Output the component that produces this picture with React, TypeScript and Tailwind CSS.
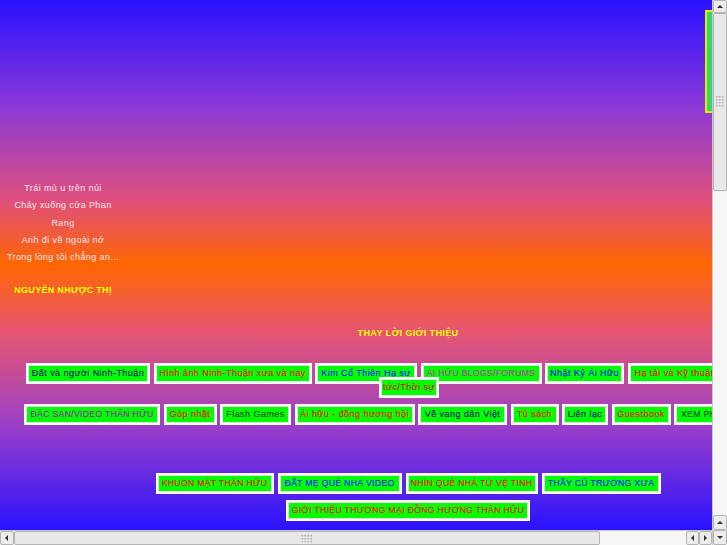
import React from "react";

type Btn = { label: string; w: number; color: string; left?: boolean };

const rowOne: Btn[] = [
  { label: "Đất và người Ninh-Thuận", w: 124, color: "text-[#14206e]" },
  { label: "Hình ảnh Ninh-Thuận xưa và nay", w: 158, color: "text-[#ee1111]" },
  { label: "Kim Cổ Thiên Hạ sự", w: 102, color: "text-[#1a1aff]" },
  { label: "ÁI HỮU BLOGS/FORUMS", w: 121, color: "text-[#b0449c]" },
  { label: "Nhật Ký Ái Hữu", w: 79, color: "text-[#1414e6]" },
  { label: "Hạ tải và Kỹ thuật", w: 140, color: "text-[#ee1111]", left: true },
];

const rowTwo: Btn[] = [
  { label: "ĐẶC SAN/VIDEO THÂN HỮU", w: 136, color: "text-[#8a2fa0]" },
  { label: "Góp nhặt", w: 53, color: "text-[#ee1111]" },
  { label: "Flash Games", w: 71, color: "text-[#1f4a1f]" },
  { label: "Ái hữu - đồng hương hội", w: 120, color: "text-[#ee1111]" },
  { label: "Về vang dân Việt", w: 89, color: "text-[#14206e]" },
  { label: "Tủ sách", w: 48, color: "text-[#ee1111]" },
  { label: "Liên lạc", w: 46, color: "text-[#14206e]" },
  { label: "Guestbook", w: 59, color: "text-[#ee1111]" },
  { label: "XEM PHIM", w: 100, color: "text-[#1f4a1f]", left: true },
];

const rowThree: Btn[] = [
  { label: "KHUÔN MẶT THÂN HỮU", w: 118, color: "text-[#ee1111]" },
  { label: "ĐẤT MẸ QUÊ NHÀ VIDEO", w: 124, color: "text-[#1a1aff]" },
  { label: "NHÌN QUÊ NHÀ TỪ VỆ TINH", w: 132, color: "text-[#ee1111]" },
  { label: "THẦY CŨ TRƯỜNG XƯA", w: 119, color: "text-[#1a1aff]" },
];

const poem = [
  "Trái mù u trên núi",
  "Chảy xuống cửa Phan",
  "Rang",
  "Anh đi về ngoài nớ",
  "Trong lòng tôi chẳng an...",
];

function NavButton({ b, children }: { b: Btn; children?: React.ReactNode }) {
  const caps = b.label === b.label.toUpperCase();
  return (
    <div
      style={{ width: b.w }}
      className={`relative shrink-0 h-[21px] flex items-center whitespace-nowrap bg-[#00ff00] border-2 border-white shadow-[inset_0_0_0_1px_#e8d8e8] [-webkit-text-stroke:0.15px] ${caps ? "text-[8.7px] tracking-[0.3px]" : "text-[9px] tracking-[0.45px]"} ${b.left ? "justify-start pl-[5px]" : "justify-center"} ${b.color}`}
    >
      {b.label}
      {children}
    </div>
  );
}

function Arrow({ dir }: { dir: "up" | "down" | "left" | "right" }) {
  const pts = {
    up: "1,5 4,2 7,5",
    down: "1,2 4,5 7,2",
    left: "5,1 2,4 5,7",
    right: "2,1 5,4 2,7",
  }[dir];
  return (
    <svg width="8" height="8" viewBox="0 0 8 8">
      <polygon points={pts} fill="#303030" />
    </svg>
  );
}

function Grip() {
  const dots = [];
  for (let r = 0; r < 4; r++) {
    for (let c = 0; c < 3; c++) {
      dots.push(<rect key={`${r}-${c}`} x={c * 3} y={r * 3} width="1.5" height="1.5" fill="#a8a8a8" />);
    }
  }
  return (
    <svg width="9" height="12" viewBox="0 0 9 12">
      {dots}
    </svg>
  );
}

function ScrollButton({ dir, className }: { dir: "up" | "down" | "left" | "right"; className: string }) {
  return (
    <div className={`flex items-center justify-center bg-[#ececec] border border-[#b4b4b4] rounded-[2px] ${className}`}>
      <Arrow dir={dir} />
    </div>
  );
}

export default function App() {
  return (
    <div className="w-[727px] h-[545px] flex overflow-hidden font-['Liberation_Sans',Arial,sans-serif]">
      <div className="w-[712px] flex flex-col">
        {/* page viewport */}
        <div className="h-[530px] overflow-hidden">
          <div className="w-[816px] h-[530px] bg-[linear-gradient(180deg,#2a12ff_0%,#8a38d8_20%,#e0507a_38%,#ff6600_50%,#e8566e_62%,#9c40c8_80%,#2a12ff_100%)]">
            {/* top area */}
            <div className="flex">
              <div className="w-[126px] shrink-0 pt-[180px] flex flex-col items-center text-[9px] tracking-[0.4px] text-[#fbe6f0]">
                {poem.map((line) => (
                  <div key={line} className="h-[17.3px] leading-[17px] whitespace-nowrap">
                    {line}
                  </div>
                ))}
                <div className="mt-[18px] text-[9px] font-bold text-[#ffff00] tracking-[0.3px]">
                  NGUYỄN NHƯỢC THỊ
                </div>
              </div>
              <div className="w-[579px] shrink-0" />
              <div className="mt-[10px] w-[100px] h-[103px] border-2 border-[#f2e600] bg-[#36d46a]" />
            </div>

            <div className="mt-[29px] text-center text-[9px] font-bold text-[#ffff00] tracking-[0.4px]">
              THAY LỜI GIỚI THIỆU
            </div>

            {/* row one */}
            <div className="mt-[23px] pl-[26px] flex gap-[3.5px]">
              {rowOne.map((b) => (
                <NavButton key={b.label} b={b}>
                  {b.label === "Kim Cổ Thiên Hạ sự" && (
                    <div className="absolute left-[62px] top-[12px] z-10 w-[60px] h-[21px] flex items-center justify-center bg-[#00ff00] border-2 border-white shadow-[inset_0_0_0_1px_#e8d8e8] text-[#d01818]">
                      tức/Thời sự
                    </div>
                  )}
                </NavButton>
              ))}
            </div>

            {/* row two */}
            <div className="mt-[20px] pl-[24px] flex gap-[3.5px]">
              {rowTwo.map((b) => (
                <NavButton key={b.label} b={b} />
              ))}
            </div>

            {/* row three */}
            <div className="mt-[48px] flex justify-center gap-[4px]">
              {rowThree.map((b) => (
                <NavButton key={b.label} b={b} />
              ))}
            </div>

            {/* row four */}
            <div className="mt-[6px] flex justify-center">
              <NavButton b={{ label: "GIỚI THIỆU THƯƠNG MẠI ĐỒNG HƯƠNG THÂN HỮU", w: 244, color: "text-[#ee1111]" }} />
            </div>
          </div>
        </div>

        {/* horizontal scrollbar */}
        <div className="h-[15px] flex bg-[#f6f6f6] border-t border-[#c8c8c8]">
          <ScrollButton dir="left" className="w-[14px]" />
          <div className="w-[586px] flex items-center justify-center bg-[#e8e8e8] border border-[#b4b4b4] rounded-[2px]">
            <div className="-rotate-90">
              <Grip />
            </div>
          </div>
          <div className="flex-1" />
          <ScrollButton dir="left" className="w-[13px]" />
          <ScrollButton dir="right" className="w-[13px]" />
        </div>
      </div>

      {/* vertical scrollbar */}
      <div className="w-[15px] h-[545px] flex flex-col bg-[#f6f6f6] border-l border-[#c8c8c8]">
        <ScrollButton dir="up" className="h-[13px]" />
        <div className="h-[178px] flex items-center justify-center bg-[#e8e8e8] border border-[#b4b4b4] rounded-[2px]">
          <Grip />
        </div>
        <div className="flex-1" />
        <ScrollButton dir="up" className="h-[15px]" />
        <ScrollButton dir="down" className="h-[15px]" />
      </div>
    </div>
  );
}
